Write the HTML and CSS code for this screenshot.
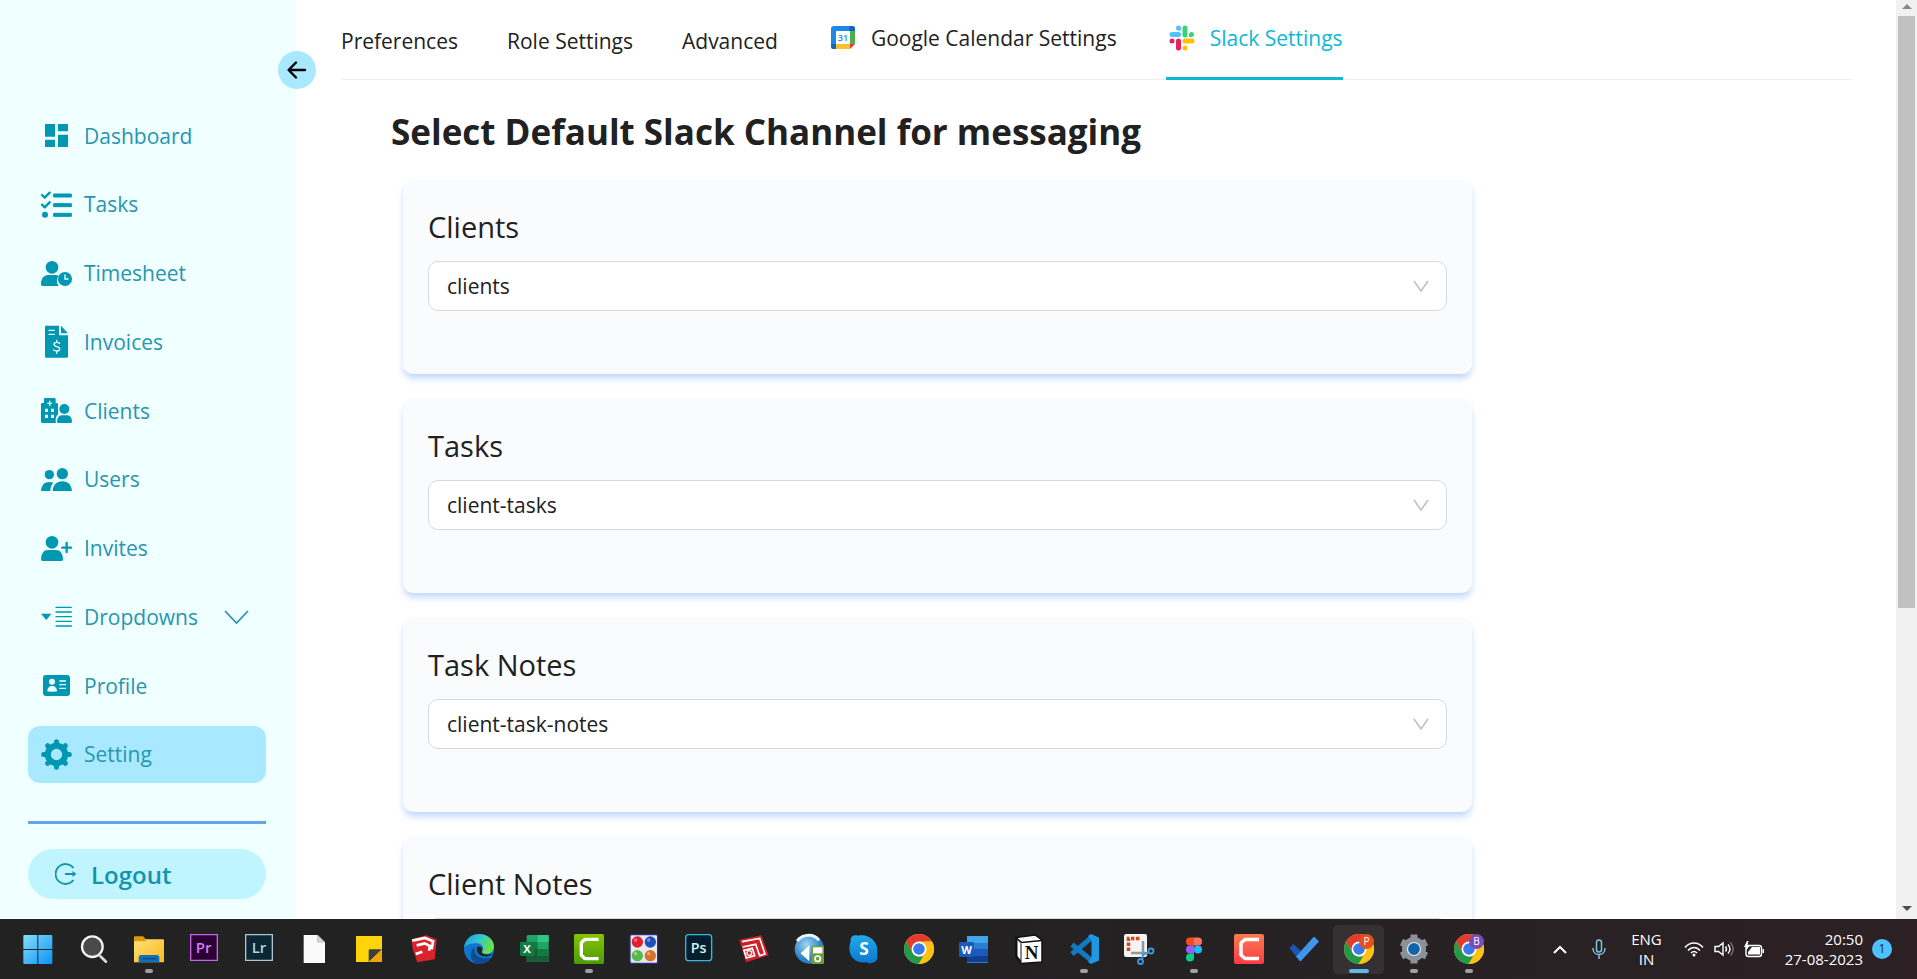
FILE: index.html
```html
<!DOCTYPE html>
<html lang="en">
<head>
<meta charset="utf-8">
<title>Slack Settings</title>
<link rel="stylesheet" href="styles.css">
</head>
<body>
<div class="screen">
  <div class="app">
    <aside class="sidebar">
      <button class="collapse" type="button" aria-label="Collapse sidebar">
        <svg width="20" height="18" viewBox="0 0 20 18" fill="none" stroke="#000" stroke-width="2.4" stroke-linecap="round" stroke-linejoin="round"><path d="M18 9H2M9 1.5 1.6 9 9 16.5"/></svg>
      </button>
      <nav class="menu">
        <a class="item" href="#"><svg class="ico" viewBox="123 240 93 93"><path d="M135 252h30v38h-30zM174 252h30v22h-30zM135 299h30v22h-30zM174 284h30v37h-30z"/></svg>Dashboard</a>
        <a class="item" href="#"><svg class="ico" viewBox="123 445 93 93"><path d="M161 460h53v9h-53zM161 489h53v9h-53zM161 518h53v9h-53z" stroke-width="3" stroke-linejoin="round" stroke="currentColor"/><circle cx="135" cy="522" r="9"/><path class="line" stroke-width="7" d="m126 463 8 8 15-15M126 492l8 8 15-15"/></svg>Tasks</a>
        <a class="item" href="#"><svg class="ico" viewBox="123 654 93 93"><circle cx="156" cy="682" r="19"/><path d="M123 733c0-18 8-27 22-28h22c4 0 7 1 9 2-7 10-7 22 0 31h-48c-3 0-5-2-5-5z"/><circle cx="195" cy="717" r="21"/><path fill="none" stroke="#f0ffff" stroke-width="4" stroke-linecap="round" d="M195 705v12h9"/></svg>Timesheet</a>
        <a class="item" href="#"><svg class="ico" viewBox="123 859 93 93"><path d="M138 858h39v29h27v63c0 3-1 4-4 4h-62c-2 0-3-1-3-4v-88c0-3 1-4 3-4zM183 858l21 23h-21z"/><path fill="none" stroke="#f0ffff" stroke-width="4" stroke-linecap="round" d="M147 872h16M147 884h16M170 902v6M170 934v7M179 911c-5-4-17-5-17 3 0 9 17 5 17 14 0 8-13 7-18 3"/></svg>Invoices</a>
        <a class="item" href="#"><svg class="ico" viewBox="123 45 93 93"><path d="M123 74c0-4 2-5 5-5h4V58c0-3 2-4 4-4h26c3 0 5 1 5 4v11h4c2 0 3 2 3 5v29c-4 4-7 10-7 18 0 4 0 6 2 8h-41c-4 0-5-2-5-5z"/><circle cx="193" cy="87" r="15"/><path d="M171 123c1-11 7-17 16-17h14c9 0 14 7 15 17 0 4-1 6-5 6h-35c-4 0-5-2-5-6z"/><path fill="#f0ffff" d="M135 86h9v10h-9zM153 86h9v10h-9zM135 104h9v10h-9zM153 104h9v10h-9zM147 62h4v6h5v4h-5v6h-4v-6h-5v-4h5z"/></svg>Clients</a>
        <a class="item" href="#"><svg class="ico" viewBox="123 252 93 93"><circle cx="148" cy="284" r="14"/><circle cx="187" cy="281" r="17"/><path d="M123 333c1-17 10-27 25-27 5 0 9 1 12 3-6 6-9 13-9 24zM158 333c1-18 12-29 29-29s28 11 29 29z"/></svg>Users</a>
        <a class="item" href="#"><svg class="ico" viewBox="123 459 93 93"><circle cx="156" cy="487" r="19"/><path d="M123 538c1-18 8-28 22-28h22c14 0 21 10 22 28 0 3-2 5-5 5h-56c-3 0-5-2-5-5z"/><path class="line" stroke-width="7" d="M200 489v27M187 503h26"/></svg>Invites</a>
        <a class="item" href="#"><svg class="ico" viewBox="123 664 93 93"><path d="M123 702h31l-15 19z"/><path class="line" stroke-width="4" d="M168 683h46M168 697h46M168 711h46M168 725h46M168 739h46"/></svg>Dropdowns<svg class="caret" width="25" height="14" viewBox="0 0 25 14" fill="none" stroke="currentColor" stroke-width="1.8"><path d="M1 1l11.500 12L24 1"/></svg></a>
        <a class="item" href="#"><svg class="ico" viewBox="123 870 93 93"><rect x="129" y="885" width="81" height="63" rx="9"/><g fill="#f0ffff"><circle cx="156" cy="905" r="9"/><path d="M142 934c0-10 5-16 14-16s15 6 15 16c-7 2-22 2-29 0z"/><path d="M178 901h20v4h-20zM178 912h20v4h-20zM178 923h20v4h-20z"/></g></svg>Profile</a>
        <a class="item active" href="#" aria-current="page"><svg class="ico" viewBox="123 177 93 93"><circle cx="169.500" cy="223.500" r="26" fill="none" stroke="currentColor" stroke-width="18"/><g class="line" stroke-width="15"><path d="M169.500 193V185M169.500 254v8M139 223.500h-8M200 223.500h8M148 202l-5-5M191 202l5-5M148 245l-5 5M191 245l5 5"/></g></svg>Setting</a>
      </nav>
      <hr class="rule">
      <button class="logout" type="button"><svg width="22" height="22" viewBox="0 0 22 22" fill="none" stroke="currentColor" stroke-width="1.800"><path d="M18.500 5A10 10 0 1 0 18.500 17M10 11h9"/><path fill="currentColor" stroke="none" d="M17.500 8l4 3-4 3z"/></svg>Logout</button>
    </aside>

    <main class="main">
      <nav class="tabs">
        <a class="tab" href="#">Preferences</a>
        <a class="tab" href="#">Role Settings</a>
        <a class="tab" href="#">Advanced</a>
        <a class="tab with-icon" href="#"><svg width="32" height="32" viewBox="0 0 32 32"><path fill="#1e88e5" d="M7 4h17v5H4V6.500Q4 4 7 4z"/><path fill="#1565c0" d="M22 4h4q2 0 2 2v3h-6zM4 22h5v5H6q-2 0-2-2z"/><path fill="#1e88e5" d="M4 9h5v13H4z"/><path fill="#4caf50" d="M23 9h5v13h-5z"/><path fill="#fbc02d" d="M9 22h14v5H9z"/><path fill="#e53935" d="M23 22h5l-5 5z"/><path fill="#fff" d="M9 9h14v13H9z"/><text x="16" y="19" text-anchor="middle" class="cal-day">31</text></svg>Google Calendar Settings</a>
        <a class="tab with-icon current" href="#" aria-current="page"><svg width="32" height="32" viewBox="-3 -3 32 32" stroke-linecap="round" stroke-width="5"><g stroke="#4fc3f7"><path d="M3 9.500h6.500"/><path d="M9.500 3v0"/></g><path fill="#4fc3f7" d="M9.500 3h2.500v2.500H9.500z"/><g stroke="#3ecf7a"><path d="M16 3v7M22.500 9.500v0"/></g><path fill="#3ecf7a" d="M20 9.500h2.500V12H20z"/><g stroke="#e91e63"><path d="M9.500 16v7M3 16v0"/></g><g stroke="#ffc107"><path d="M16 16h7M16 23v0"/></g></svg>Slack Settings</a>
      </nav>
      <section class="pane">
        <h1 class="title">Select Default Slack Channel for messaging</h1>
        <div class="cards">
          <div class="card"><label class="label" for="s1">Clients</label><div class="field"><select class="select" id="s1"><option>clients</option></select><svg class="arrow" width="16" height="12" viewBox="0 0 16 12"><path d="M1 1l7 10 7-10"/></svg></div></div>
          <div class="card"><label class="label" for="s2">Tasks</label><div class="field"><select class="select" id="s2"><option>client-tasks</option></select><svg class="arrow" width="16" height="12" viewBox="0 0 16 12"><path d="M1 1l7 10 7-10"/></svg></div></div>
          <div class="card"><label class="label" for="s3">Task Notes</label><div class="field"><select class="select" id="s3"><option>client-task-notes</option></select><svg class="arrow" width="16" height="12" viewBox="0 0 16 12"><path d="M1 1l7 10 7-10"/></svg></div></div>
          <div class="card"><label class="label" for="s4">Client Notes</label><div class="field"><select class="select" id="s4"><option></option></select><svg class="arrow" width="16" height="12" viewBox="0 0 16 12"><path d="M1 1l7 10 7-10"/></svg></div></div>
        </div>
      </section>
    </main>

    <div class="scrollbar" aria-hidden="true">
      <svg width="10" height="5" viewBox="0 0 10 5"><path fill="#8a8a8a" d="M5 0l5 5H0z"/></svg>
      <div class="track"><div class="thumb"></div></div>
      <svg width="10" height="5" viewBox="0 0 10 5"><path fill="#505050" d="M0 0h10L5 5z"/></svg>
    </div>
  </div>

  <footer class="taskbar">
    <svg class="defs" width="0" height="0" aria-hidden="true"><defs>
      <linearGradient id="win" x2="1" y2="1"><stop stop-color="#84dffc"/><stop offset="1" stop-color="#0a93f5"/></linearGradient>
      <linearGradient id="fold" x2="1" y2="1"><stop stop-color="#ffe07a"/><stop offset="1" stop-color="#fdb81e"/></linearGradient>
      <linearGradient id="edge1" x2="1" y2=".4"><stop stop-color="#1794e0"/><stop offset=".5" stop-color="#35c1d8"/><stop offset="1" stop-color="#66e14a"/></linearGradient>
      <linearGradient id="cam" x2="0" y2="1"><stop stop-color="#86c400"/><stop offset="1" stop-color="#4a9c06"/></linearGradient>
      <linearGradient id="camr" x2="0" y2="1"><stop stop-color="#ff7a50"/><stop offset="1" stop-color="#fa3c46"/></linearGradient>
      <linearGradient id="sky" x2="0" y2="1"><stop stop-color="#22a8ec"/><stop offset="1" stop-color="#0a78d0"/></linearGradient>
      <radialGradient id="globe" cx=".4" cy=".35"><stop stop-color="#9ed4f5"/><stop offset="1" stop-color="#2b82c4"/></radialGradient>
      <symbol id="chrome" viewBox="0 0 32 32"><circle cx="16" cy="16" r="15" fill="#fbc116"/><path fill="#e33b2e" d="M3 8.500A15 15 0 0 1 29 8.500H16L9.500 20z"/><path fill="#229a4b" d="M3 8.500 9.700 20Q12 23.500 16 23.500h6.300L15.500 31A15 15 0 0 1 3 8.500z"/><path fill="#fbc116" d="M29 8.500A15 15 0 0 1 15.500 31l7-11.500q2-5-1-11z"/><circle cx="16" cy="16" r="7.500" fill="#fff"/><circle cx="16" cy="16" r="5.800" fill="#3b7ae8"/></symbol>
    </defs></svg>
    <div class="apps">
      <button class="app-btn" aria-label="Start"><svg viewBox="68 69 96 96"><path fill="url(#win)" d="M71 75h40v42H69V77zM114 75h40l2 2v40h-42zM69 120h42v42H71l-2-2zM114 120h42v40l-2 2h-40z"/></svg></button>
      <button class="app-btn" aria-label="Search"><svg viewBox="234 69 96 96"><path stroke="#dcdcdc" stroke-width="8" stroke-linecap="round" d="m301 139 17 16"/><circle cx="277" cy="110" r="31" fill="#4a4a4a" stroke="#f2f2f2" stroke-width="7"/></svg></button>
      <button class="app-btn open" aria-label="File Explorer"><svg viewBox="399 69 96 96"><path fill="#dd9b0b" d="M402 82q0-3 3-3h24l8 8h6v20h-41z"/><path fill="url(#fold)" d="M402 94h32l7-6h48q3 0 3 3v66h-90z"/><path fill="#0f6fb8" d="M416 157v-14q0-8 8-8h46q8 0 8 8v14z"/><path fill="#0a4b86" d="M427 144h42v4h-42z"/></svg></button>
      <button class="app-btn" aria-label="Premiere Pro"><svg viewBox="564 69 96 96"><path fill="#2a0134" stroke="#c767e6" stroke-width="4" d="M572 74h80v77h-80z"/><text x="611" y="129" text-anchor="middle" font-size="45" font-weight="600" fill="#d77cf2">Pr</text></svg></button>
      <button class="app-btn" aria-label="Lightroom"><svg viewBox="729 69 96 96"><path fill="#0a2733" stroke="#adc6d2" stroke-width="4" d="M737 74h80v77h-80z"/><text x="777" y="129" text-anchor="middle" font-size="45" font-weight="600" fill="#b3d1de">Lr</text></svg></button>
      <button class="app-btn" aria-label="Document"><svg viewBox="894 69 96 96"><path fill="#fafafa" d="M911 75h42l22 22v62h-64z"/><path fill="#d8d8d8" stroke="#777" d="M953 76v20h21z"/></svg></button>
      <button class="app-btn" aria-label="Sticky Notes"><svg viewBox="1059 69 96 96"><path fill="#fdd40a" d="M1068 78h78v78h-78z"/><path fill="#3d3d3d" d="M1106 156v-34q0-4 4-4h36z"/><path fill="#f0a30a" d="M1146 118v38h-38z"/></svg></button>
      <button class="app-btn" aria-label="SketchUp"><svg viewBox="1224 69 96 96"><path fill="#d9232b" d="m1234 88 44-12 32 12-6 60-52 9-14-40z"/><path fill="none" stroke="#fff" stroke-width="8" d="m1237 92 38-8 24 10-4 24M1250 106l24-6 16 8-3 14M1247 132l20-7"/></svg></button>
      <button class="app-btn" aria-label="Edge"><svg viewBox="1389 69 96 96"><circle cx="1437" cy="117" r="45" fill="#1173cb"/><path fill="url(#edge1)" d="M1392 114c3-27 22-42 45-42 27 0 45 18 45 37 0 16-11 23-23 23-9 0-16-3-12-8 7-11-2-24-17-24-16 0-33 5-38 14z"/><path fill="#0b4c8f" d="M1424 112c-5 19 9 39 50 31-8 14-26 21-43 18-20-5-27-34-7-49z"/><path fill="#232223" d="M1432 110c-6 13 4 28 22 29 11 1 19-2 25-6-10 0-31 3-34-7 5-8 1-18-13-16z"/></svg></button>
      <button class="app-btn" aria-label="Excel"><svg viewBox="112 69 96 96"><path fill="#21a366" d="M141 75h63v80h-66V78z"/><path fill="#33c481" d="M171 75h33v21h-33z"/><path fill="#107c41" d="M138 96h33v21h-33zM171 117h33v20h-33z"/><path fill="#185c37" d="M138 117h33v20h33v18h-66z"/><rect x="118" y="95" width="43" height="43" rx="4" fill="#107c41"/><text x="139" y="129" text-anchor="middle" font-size="34" font-weight="700" fill="#fff">X</text></svg></button>
      <button class="app-btn open" aria-label="Camtasia"><svg viewBox="279 69 96 96"><rect x="282" y="72" width="90" height="90" rx="5" fill="url(#cam)"/><path fill="none" stroke="#fff" stroke-width="10" stroke-linejoin="bevel" d="M356 88h-41l-11 10v38l11 10h41"/></svg></button>
      <button class="app-btn" aria-label="Color Picker"><svg viewBox="444 69 96 96"><rect x="450" y="74" width="83" height="86" rx="5" fill="#e8e8ee" stroke="#2c2c8e" stroke-width="4"/><circle cx="472" cy="96" r="17" fill="#e02030"/><circle cx="511" cy="96" r="17" fill="#1d51b5"/><circle cx="472" cy="137" r="17" fill="#58b947"/><circle cx="511" cy="137" r="17" fill="#d8702e"/><g fill="#fff" opacity=".4"><circle cx="467" cy="90" r="5"/><circle cx="506" cy="90" r="5"/><circle cx="467" cy="131" r="5"/><circle cx="506" cy="131" r="5"/></g></svg></button>
      <button class="app-btn" aria-label="Photoshop"><svg viewBox="609 69 96 96"><rect x="617" y="74" width="78" height="78" rx="9" fill="#041e2c" stroke="#35b6e6" stroke-width="4"/><text x="656" y="129" text-anchor="middle" font-size="43" font-weight="600" fill="#d6f0fb">Ps</text></svg></button>
      <button class="app-btn" aria-label="LayOut"><svg viewBox="773 69 96 96"><path fill="#d0202b" d="m777 89 66-13 22 60-68 21z"/><path fill="none" stroke="#fff" stroke-width="5" d="m785 95 53-10 16 47-16 5-12-34-39 8M791 121l25-6 7 22-25 7z"/><circle cx="807" cy="129" r="7" fill="none" stroke="#fff" stroke-width="4"/></svg></button>
      <button class="app-btn" aria-label="Download Manager"><svg viewBox="939 69 96 96"><circle cx="988" cy="117" r="44" fill="url(#globe)"/><path fill="none" stroke="#e6f5fc" stroke-width="9" d="M951 93c20-24 52-22 66-2"/><path fill="#fff" d="m962 130 26-24v48z"/><rect x="994" y="107" width="38" height="55" rx="4" fill="#6da03f"/><path fill="#fff" d="M999 112h28v18h-28z"/><circle cx="1013" cy="146" r="8" fill="none" stroke="#fff" stroke-width="5"/></svg></button>
      <button class="app-btn" aria-label="Skype"><svg viewBox="1104 69 96 96"><path fill="url(#sky)" d="M1112 94c-3-14 8-21 23-17 34-7 64 22 56 55 7 22-14 33-33 25-35 6-60-26-46-63z"/><text x="1152" y="135" text-anchor="middle" font-size="52" font-weight="700" fill="#fff">S</text></svg></button>
      <button class="app-btn" aria-label="Chrome"><svg viewBox="0 0 32 32"><use href="#chrome"/></svg></button>
      <button class="app-btn" aria-label="Word"><svg viewBox="0 0 32 32"><path fill="#2b7cd3" d="M9 3h21v27H9z"/><path fill="#41a5ee" d="M9 3h21v7H9z"/><path fill="#185abd" d="M9 16h21v7H9z"/><path fill="#103f91" d="M9 23h21v6H9z"/><rect x="1" y="9" width="15" height="15" rx="1.500" fill="#185abd"/><text x="8.500" y="20.500" text-anchor="middle" font-size="11" font-weight="700" fill="#fff">W</text></svg></button>
      <button class="app-btn" aria-label="Notion"><svg viewBox="0 0 32 32"><path fill="#fff" stroke="#111" stroke-width="1.500" d="M3 4.500 22 2l7 5v22L8 30.500 3 24z"/><path fill="#111" d="m3 5 5.500 6v19L3 24z"/><path fill="#fff" d="m4.500 7 3 3.500V27l-3-4z"/><path fill="none" stroke="#111" stroke-width="1.500" d="M3 4.500 8.500 9.500 29 7.500"/><text x="18.500" y="25.500" text-anchor="middle" class="serif" font-size="19">N</text></svg></button>
      <button class="app-btn open" aria-label="VS Code"><svg viewBox="0 0 32 32"><path fill="none" stroke="#1279c2" stroke-width="5" stroke-linejoin="round" d="M23 5 4 21M4 11.500 23 27"/><path fill="#2196e3" d="M23 1l8 3.500v23L23 31l-3-2 3.500-4.500v-17L20 3z"/></svg></button>
      <button class="app-btn" aria-label="Snipping Tool"><svg viewBox="0 0 32 32"><rect x="1" y="1" width="23" height="23" rx="2" fill="#f4f4f4"/><path fill="none" stroke="#d14a1c" stroke-width="3.500" stroke-dasharray="3.500 1.500" d="M5.500 18V5.500H18"/><path fill="none" stroke="#8d98a0" stroke-width="2.500" d="M20 8v15M8 20h17"/><path fill="none" stroke="#3c9ad8" stroke-width="2" d="M19 26.500l1-5 5.500-2"/><circle cx="17.500" cy="28.500" r="2.500" fill="none" stroke="#3c9ad8" stroke-width="1.800"/><circle cx="28" cy="18" r="2.500" fill="none" stroke="#3c9ad8" stroke-width="1.800"/></svg></button>
      <button class="app-btn open" aria-label="Figma"><svg viewBox="0 0 32 32"><path fill="#f24e1e" d="M16 4.500h-4a4 4 0 0 0 0 8h4z"/><path fill="#ff7262" d="M16 4.500h4a4 4 0 0 1 0 8h-4z"/><path fill="#a259ff" d="M16 12.500h-4a4 4 0 0 0 0 8h4z"/><circle cx="20" cy="16.500" r="4" fill="#1abcfe"/><path fill="#0acf83" d="M12 20.500h4v4a4 4 0 1 1-4-4z"/></svg></button>
      <button class="app-btn" aria-label="Camtasia Recorder"><svg viewBox="0 0 32 32"><rect x="1" y="1" width="30" height="30" rx="2" fill="url(#camr)"/><path fill="none" stroke="#fff" stroke-width="3.500" stroke-linejoin="bevel" d="M26 6.500H12L8 10v12l4 3.500h14"/></svg></button>
      <button class="app-btn" aria-label="To Do"><svg viewBox="0 0 32 32"><path fill="#1a54b8" d="m1.500 15 4-4 10 9.500-3.500 8z"/><path fill="#3c96ea" d="m8 23.500 18-20 5 5-18.500 20z"/></svg></button>
      <button class="app-btn open focused" aria-label="Chrome, profile P"><svg viewBox="0 0 32 32"><use href="#chrome"/><circle cx="23.500" cy="8.500" r="7.500" fill="#e4511c"/><text x="23.500" y="12" text-anchor="middle" font-size="10" fill="#fff">P</text></svg></button>
      <button class="app-btn open" aria-label="Settings"><svg viewBox="0 0 32 32"><circle cx="16" cy="16" r="9" fill="#1b66a8" stroke="#8a9199" stroke-width="6"/><path stroke="#8a9199" stroke-width="7" stroke-linejoin="round" d="M16 6V1.500M16 26v4.500M7.500 11 3.500 9M24.500 11l4-2M7.500 21l-4 2M24.500 21l4 2"/><circle cx="16" cy="16" r="6.500" fill="#0f64ad" stroke="#e6eef5" stroke-width="1.200"/></svg></button>
      <button class="app-btn open" aria-label="Chrome, profile B"><svg viewBox="0 0 32 32"><use href="#chrome"/><circle cx="23.500" cy="8.500" r="7.500" fill="#7a4bb8"/><text x="23.500" y="12" text-anchor="middle" font-size="10" fill="#fff">B</text></svg></button>
    </div>
    <div class="tray">
      <svg width="14" height="9" viewBox="0 0 14 9" fill="none" stroke="#fff" stroke-width="2"><path d="M1 8l6-6 6 6"/></svg>
      <svg class="mic" width="14" height="20" viewBox="0 0 14 20" fill="none" stroke="#7cc4dc" stroke-width="1.500" stroke-linecap="round"><rect x="4.500" y="1" width="5" height="12" rx="2.500"/><path d="M1 9.500c0 8 12 8 12 0M7 16v3.500"/></svg>
      <span class="lang">ENG<br>IN</span>
      <span class="status">
        <svg width="20" height="16" viewBox="0 0 20 16" fill="none" stroke="#fff" stroke-width="1.600"><path d="M1 6.500c5-6 13-6 18 0M4 9.500c3.500-4 8.500-4 12 0M7 12c2-2 4-2 6 0"/><circle cx="10" cy="14" r="1.500" fill="#fff" stroke="none"/></svg>
        <svg width="20" height="16" viewBox="0 0 20 16" fill="none" stroke="#fff" stroke-width="1.400"><path d="M1 5.500v5h3.500L9 14V2L4.500 5.500zM11.500 5.500q2 2.500 0 5M14 3.500q4 4.500 0 9"/><path stroke="#77706f" d="M16.500 1.500q5.500 6.500 0 13"/></svg>
        <svg width="21" height="17" viewBox="0 0 21 17"><rect x="2" y="4.500" width="15.500" height="11" rx="2.500" fill="none" stroke="#fff" stroke-width="1.400"/><path fill="#fff" d="M4 13.500V11l4-5h8v7.500zM18.500 8h1.500v4h-1.500zM3 0 0 6h2.500L2 10l4-6H3.500l1-4z"/></svg>
      </span>
      <span class="clock">20:50<br>27-08-2023</span>
      <span class="badge">1</span>
    </div>
  </footer>
</div>
</body>
</html>
```
FILE: styles.css
```css
* { box-sizing: border-box; }
body {
  margin: 0;
  font-family: "Open Sans", "Noto Sans", sans-serif;
  color: #212121;
  background: #fff;
}
a { color: inherit; text-decoration: none; }
button { border: 0; padding: 0; font: inherit; color: inherit; background: none; }
.screen { display: flex; flex-direction: column; height: 100vh; overflow: hidden; }
.app { display: flex; flex: 1; min-height: 0; }

.sidebar {
  position: relative;
  display: flex;
  flex-direction: column;
  flex: 0 0 296px;
  padding: 107px 30px 20px 28px;
  background: #f0ffff;
  color: #0097b2;
}
.collapse {
  position: absolute;
  top: 51px;
  right: -20px;
  display: flex;
  align-items: center;
  justify-content: center;
  width: 38px;
  height: 38px;
  border-radius: 50%;
  background: #a8e9ff;
}
.menu { display: flex; flex: 1; flex-direction: column; justify-content: space-between; }
.item {
  display: flex;
  align-items: center;
  gap: 12px;
  height: 57px;
  padding-left: 13px;
  border-radius: 12px;
  font-size: 21px;
  color: #2896ae;
}
.item.active { background: #a8e9ff; }
.ico { width: 31px; height: 31px; fill: currentColor; color: #0097b2; overflow: visible; }
.ico .line { fill: none; stroke: currentColor; stroke-linecap: round; stroke-linejoin: round; }
.caret { margin-left: 14px; }
.rule { width: 100%; height: 3px; margin: 38px 0 25px; border: 0; background: #64a5ea; }
.logout {
  display: flex;
  align-items: center;
  gap: 14px;
  height: 50px;
  padding-left: 27px;
  border-radius: 25px;
  background: #c0f5ff;
  color: #1493aa;
  font-size: 24px;
  font-weight: 600;
}

.main { flex: 1; min-width: 0; padding: 0 44px 0 45px; overflow: hidden; }
.tabs { display: flex; gap: 49px; height: 80px; border-bottom: 1px solid #f0f0f0; }
.tab { height: 80px; padding-top: 26px; font-size: 21px; line-height: 30px; white-space: nowrap; }
.with-icon { display: flex; gap: 12px; padding-top: 22px; line-height: 32px; }
.current { border-bottom: 3px solid #0fb8d2; color: #0fb8d2; }
.cal-day { font-size: 9px; font-weight: 600; fill: #1e88e5; }
.pane { padding: 24px 50px 0; }
.title { margin: 0; font-size: 35px; font-weight: 700; line-height: 56px; }
.cards { display: grid; gap: 25px; max-width: 1093px; padding: 20px 12px; }
.card {
  display: flex;
  flex-direction: column;
  height: 194px;
  padding: 25px;
  border-radius: 10px;
  background: #fafbfd;
  box-shadow: 0 5px 7px -1px rgba(59, 130, 246, 0.34);
}
.label { margin-bottom: 12px; font-size: 29px; line-height: 44px; }
.field { position: relative; }
.select {
  display: block;
  width: 100%;
  height: 50px;
  padding: 0 48px 0 18px;
  border: 1px solid #d9d9d9;
  border-radius: 10px;
  background: #fff;
  appearance: none;
  font: inherit;
  font-size: 21px;
  color: #212121;
}
.arrow { position: absolute; top: 19px; right: 18px; fill: none; stroke: #bfbfbf; stroke-width: 1.5; pointer-events: none; }

.scrollbar {
  display: flex;
  flex-direction: column;
  align-items: center;
  gap: 7px;
  flex: 0 0 21px;
  padding: 4px 0 8px;
  background: #f1f1f1;
}
.track { flex: 1; width: 17px; }
.thumb { height: 67%; background: #c1c1c1; }

.taskbar {
  display: flex;
  justify-content: space-between;
  flex: 0 0 60px;
  padding: 0 25px 0 11px;
  background: linear-gradient(90deg, #232223 50%, #2c2024);
  color: #fff;
}
.defs { position: absolute; }
.apps { display: flex; }
.app-btn { position: relative; display: flex; align-items: center; justify-content: center; width: 55px; height: 60px; }
.app-btn svg { position: relative; width: 32px; height: 32px; }
.app-btn.open::after {
  content: "";
  position: absolute;
  bottom: 6px;
  width: 8px;
  height: 4px;
  border-radius: 2px;
  background: #a0a0a0;
}
.app-btn.focused::before { content: ""; position: absolute; inset: 6px 2px 5px; border-radius: 5px; background: #353031; }
.app-btn.focused::after { width: 20px; background: #5fb8ea; }
.serif { font-family: "Liberation Serif", serif; font-weight: 700; fill: #111; }
.tray { display: flex; align-items: center; font-size: 15px; line-height: 20px; }
.mic { margin-left: 25px; }
.lang { margin-left: 25px; text-align: center; }
.status { display: flex; align-items: center; gap: 10px; margin-left: 22px; }
.clock { margin: 0 9px 0 20px; text-align: right; }
.badge { width: 20px; border-radius: 10px; background: #4cc2ff; color: #1b2a33; font-size: 12px; text-align: center; }
```
